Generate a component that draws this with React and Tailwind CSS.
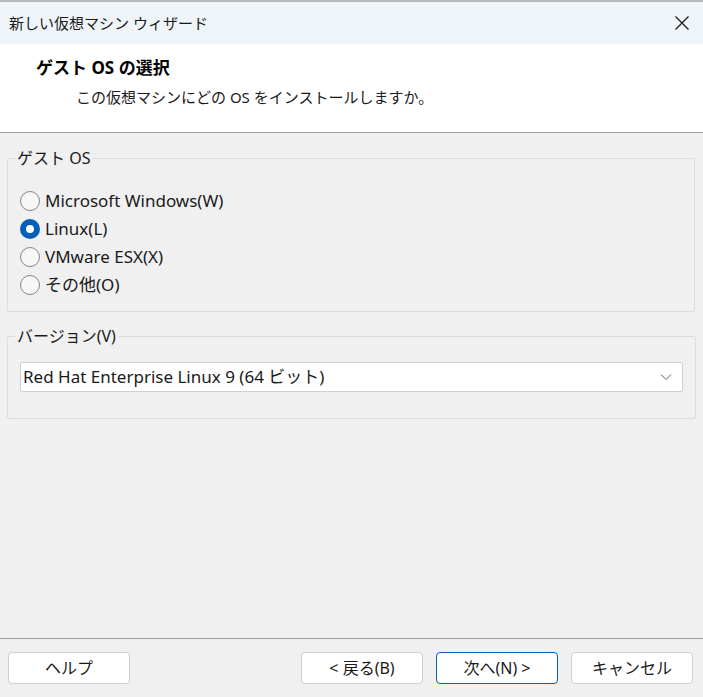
import React, { useState } from 'react'

const font = { fontFamily: '"Noto Sans", "Noto Sans CJK JP", sans-serif' }

const Radio = ({ label, checked, onClick }) => (
  <label className="flex items-center h-[28px] cursor-default" onClick={onClick}>
    {checked ? (
      <span className="w-[20px] h-[20px] rounded-full bg-[#005fb8] flex items-center justify-center">
        <span className="w-[8px] h-[8px] rounded-full bg-white" />
      </span>
    ) : (
      <span className="w-[20px] h-[20px] rounded-full border border-[#858585] bg-[#f7f7f7]" />
    )}
    <span className="ml-[5px] text-[17px] text-[#1a1a1a]">{label}</span>
  </label>
)

const Btn = ({ children, primary }) => (
  <button
    className={
      'w-[122px] h-[32px] rounded-[4px] bg-white text-[16px] text-[#1a1a1a] border ' +
      (primary ? 'border-[#005fb8]' : 'border-[#d0d0d0]')
    }
  >
    {children}
  </button>
)

export default function App() {
  const [os, setOs] = useState(1)
  const options = ['Microsoft Windows(W)', 'Linux(L)', 'VMware ESX(X)', 'その他(O)']

  return (
    <div className="w-[703px] h-[697px] bg-[#f0f0f0] overflow-hidden flex flex-col border-t-2 border-[#b9b9b9]" style={font}>
      {/* title bar */}
      <div className="h-[42px] bg-[#eff4f9] flex items-center justify-between pl-[9px] pr-[10px] shrink-0">
        <span className="text-[15px] text-[#1a1a1a]">新しい仮想マシン ウィザード</span>
        <svg width="16" height="16" viewBox="0 0 16 16" className="mr-[3px]">
          <path d="M1.5 1.5 L14.5 14.5 M14.5 1.5 L1.5 14.5" stroke="#1a1a1a" strokeWidth="1.3" fill="none" />
        </svg>
      </div>

      {/* header */}
      <div className="h-[89px] bg-white border-b border-[#a0a0a0] shrink-0 pt-[12px]">
        <div className="pl-[36px] text-[17px] font-bold text-black leading-[24px]">ゲスト OS の選択</div>
        <div className="pl-[76px] mt-[6px] text-[15px] text-[#1a1a1a] leading-[22px]">
          この仮想マシンにどの OS をインストールしますか。
        </div>
      </div>

      {/* body */}
      <div className="flex-1 px-[7px] pt-[15px]">
        <fieldset className="border border-[#dcdcdc] rounded-[2px] pl-[12px] pb-[12px] pt-[19px] m-0 w-[688px]">
          <legend className="ml-[-5px] px-[2px] text-[16px] text-[#1a1a1a] leading-[20px]">ゲスト OS</legend>
          <div className="flex flex-col">
            {options.map((o, i) => (
              <Radio key={o} label={o} checked={os === i} onClick={() => setOs(i)} />
            ))}
          </div>
        </fieldset>

        <fieldset className="mt-[14px] border border-[#dcdcdc] rounded-[2px] px-[12px] pt-[16px] pb-[26px] m-0 w-[688px]">
          <legend className="ml-[-5px] px-[2px] text-[16px] text-[#1a1a1a] leading-[20px]">バージョン(V)</legend>
          <div className="h-[30px] bg-white border border-[#cfcfcf] rounded-[2px] flex items-center justify-between pl-[2px] pr-[10px] w-[663px]">
            <span className="text-[17px] text-[#1a1a1a]">Red Hat Enterprise Linux 9 (64 ビット)</span>
            <svg width="12" height="8" viewBox="0 0 12 8">
              <path d="M1 1.5 L6 6.5 L11 1.5" stroke="#5f5f5f" strokeWidth="1" fill="none" />
            </svg>
          </div>
        </fieldset>
      </div>

      {/* footer */}
      <div className="h-[59px] border-t border-[#a0a0a0] shrink-0 flex items-start pt-[13px] px-[8px]">
        <Btn>ヘルプ</Btn>
        <div className="flex-1" />
        <div className="flex gap-[13px] pr-[2px]">
          <Btn>&lt; 戻る(B)</Btn>
          <Btn primary>次へ(N) &gt;</Btn>
          <Btn>キャンセル</Btn>
        </div>
      </div>
    </div>
  )
}
